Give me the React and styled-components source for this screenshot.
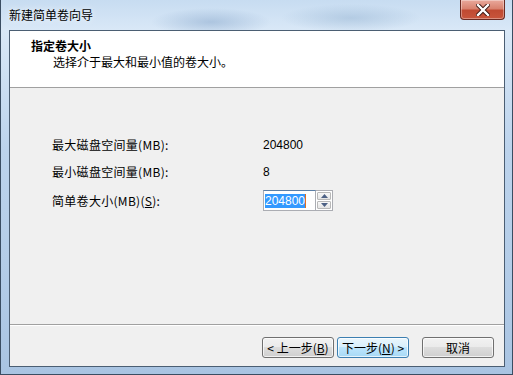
import React from 'react';
import styled, { createGlobalStyle } from 'styled-components';

const GlobalStyle = createGlobalStyle`
  html, body { margin: 0; padding: 0; }
  body {
    width: 513px;
    height: 375px;
    overflow: hidden;
    font-family: "Noto Sans CJK SC", "Liberation Sans", sans-serif;
    font-size: 12px;
    color: #000;
  }
`;

// Aero glass frame
const Window = styled.div`
  box-sizing: border-box;
  width: 513px;
  height: 375px;
  display: flex;
  flex-direction: column;
  padding: 0 7px 7px 8px;
  border: 1px solid #3a4d62;
  border-top: none;
  background:
    radial-gradient(ellipse 60px 14px at 210px 22px, rgba(140, 170, 205, 0.55), transparent),
    radial-gradient(ellipse 70px 14px at 350px 18px, rgba(150, 180, 210, 0.5), transparent),
    radial-gradient(ellipse 40px 10px at 150px 356px, rgba(255, 255, 255, 0.6), transparent),
    linear-gradient(180deg, #c7dcf1 0%, #d9e8f7 8%, #bcd3ec 40%, #b4cde8 70%, #a9c4e2 100%);
`;

const TitleBar = styled.div`
  height: 30px;
  display: flex;
  align-items: flex-start;
  justify-content: space-between;
`;

const Title = styled.span`
  margin-top: 6px;
  font-size: 12px;
  color: #000;
  text-shadow: 0 0 6px rgba(255, 255, 255, 0.9);
`;

const CloseButton = styled.div`
  width: 43px;
  height: 19px;
  border: 1px solid #6a2a22;
  border-top: none;
  border-radius: 0 0 4px 4px;
  background: linear-gradient(180deg, #e9a99c 0%, #d9826f 45%, #c04a32 55%, #c8553c 100%);
  box-shadow: inset 0 0 0 1px rgba(255, 255, 255, 0.35);
  display: flex;
  align-items: center;
  justify-content: center;
`;

const Client = styled.div`
  flex: 1;
  display: flex;
  flex-direction: column;
  background: #f0f0f0;
  border: 1px solid #4b5e73;
`;

const Header = styled.div`
  height: 57px;
  background: #fff;
  border-bottom: 1px solid #a0a0a0;
  padding: 6px 0 0 21px;
  box-sizing: border-box;
`;

const HeaderTitle = styled.div`
  font-weight: bold;
  font-size: 12px;
  line-height: 17px;
`;

const HeaderSub = styled.div`
  font-size: 12px;
  line-height: 16px;
  padding-left: 22px;
`;

const Body = styled.div`
  flex: 1;
  padding: 48px 0 0 42px;
  display: flex;
  flex-direction: column;
  gap: 10px;
`;

const Row = styled.div`
  display: grid;
  grid-template-columns: 211px auto;
  align-items: center;
  height: ${({ $h }) => $h || 17}px;
`;

const Label = styled.span`
  font-size: 12px;
  letter-spacing: 0.3px;
`;

const Value = styled.span`
  font-family: "Liberation Sans", sans-serif;
  font-size: 12px;
`;

const Spin = styled.div`
  display: flex;
  align-items: stretch;
  height: 21px;
`;

const SpinInput = styled.div`
  width: 53px;
  box-sizing: border-box;
  border: 1px solid #abadb3;
  border-top-color: #5c7fa6;
  background: #fff;
  padding: 2px 1px;
  display: flex;
  align-items: center;
`;

const Selected = styled.span`
  background: #3399ff;
  color: #fff;
  font-family: "Liberation Sans", sans-serif;
  font-size: 12px;
  line-height: 14px;
  border-right: 1px solid #e07020;
`;

const SpinButtons = styled.div`
  width: 17px;
  box-sizing: border-box;
  border: 1px solid #abadb3;
  border-left: none;
  background: #fff;
  padding: 1px;
  display: flex;
  flex-direction: column;
  gap: 1px;
`;

const SpinArrow = styled.div`
  flex: 1;
  border: 1px solid #b8b8b8;
  border-radius: 1px;
  background: linear-gradient(180deg, #f8f8f8, #e4e4e4);
  display: flex;
  align-items: center;
  justify-content: center;
`;

const Footer = styled.div`
  height: 42px;
  border-top: 1px solid #a0a0a0;
  box-shadow: inset 0 1px 0 #fff;
  display: flex;
  align-items: flex-start;
  justify-content: flex-end;
  padding: 12px 10px 0 0;
  box-sizing: border-box;
`;

const ButtonGroup = styled.div`
  display: flex;
  gap: 3px;
  margin-right: 13px;
`;

const Button = styled.div`
  width: 72px;
  height: 21px;
  box-sizing: border-box;
  border: 1px solid ${({ $focused }) => ($focused ? '#3c7fb1' : '#707070')};
  border-radius: 3px;
  background: ${({ $focused }) =>
    $focused
      ? 'linear-gradient(180deg, #eaf6fd 0%, #d9f0fc 45%, #bee6fd 50%, #a7d9f5 100%)'
      : 'linear-gradient(180deg, #f2f2f2 0%, #ebebeb 45%, #dddddd 50%, #cfcfcf 100%)'};
  box-shadow: inset 0 0 0 1px rgba(255, 255, 255, 0.7);
  display: flex;
  align-items: center;
  justify-content: center;
  font-size: 12px;
  white-space: nowrap;
`;

const Key = styled.u`
  text-decoration-thickness: 1px;
  text-underline-offset: 1px;
`;

const Arrow = ({ up }) => (
  <svg width="7" height="4" viewBox="0 0 7 4">
    <path d={up ? 'M0 4 L3.5 0 L7 4 Z' : 'M0 0 L3.5 4 L7 0 Z'} fill="#4d6185" />
  </svg>
);

const CloseGlyph = () => (
  <svg width="14" height="12" viewBox="0 0 14 12">
    <path d="M2 1 L12 11 M12 1 L2 11" stroke="#3a1410" strokeWidth="4.2" strokeLinecap="square" />
    <path d="M2 1 L12 11 M12 1 L2 11" stroke="#fff" strokeWidth="2.4" strokeLinecap="square" />
  </svg>
);

const App = () => (
  <>
    <GlobalStyle />
    <Window>
      <TitleBar>
        <Title>新建简单卷向导</Title>
        <CloseButton>
          <CloseGlyph />
        </CloseButton>
      </TitleBar>
      <Client>
        <Header>
          <HeaderTitle>指定卷大小</HeaderTitle>
          <HeaderSub>选择介于最大和最小值的卷大小。</HeaderSub>
        </Header>
        <Body>
          <Row>
            <Label>最大磁盘空间量(MB):</Label>
            <Value>204800</Value>
          </Row>
          <Row>
            <Label>最小磁盘空间量(MB):</Label>
            <Value>8</Value>
          </Row>
          <Row $h={21}>
            <Label>简单卷大小(MB)(<Key>S</Key>):</Label>
            <Spin>
              <SpinInput>
                <Selected>204800</Selected>
              </SpinInput>
              <SpinButtons>
                <SpinArrow><Arrow up /></SpinArrow>
                <SpinArrow><Arrow /></SpinArrow>
              </SpinButtons>
            </Spin>
          </Row>
        </Body>
        <Footer>
          <ButtonGroup>
            <Button>&lt; 上一步(<Key>B</Key>)</Button>
            <Button $focused>下一步(<Key>N</Key>) &gt;</Button>
          </ButtonGroup>
          <Button>取消</Button>
        </Footer>
      </Client>
    </Window>
  </>
);

export default App;
